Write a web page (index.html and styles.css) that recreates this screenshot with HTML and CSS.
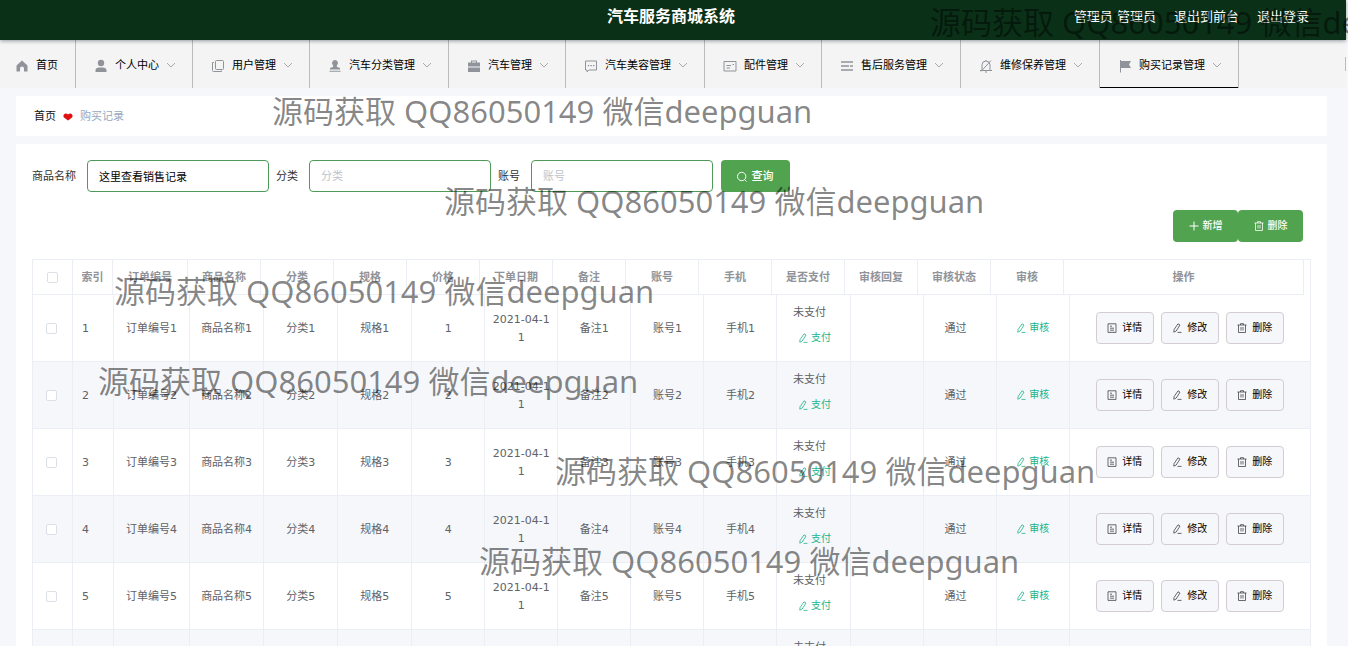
FILE: index.html
```html
<!DOCTYPE html>
<html lang="zh-CN">
<head>
<meta charset="utf-8">
<title>汽车服务商城系统</title>
<link rel="stylesheet" href="styles.css">
</head>
<body>
<svg class="sprite" aria-hidden="true">
  <symbol id="home" viewBox="0 0 14 14"><path fill="currentColor" d="M7 1.500 1.500 6.500V12.500h3.500V9.500a2 2 0 0 1 4 0v3h3.500V6.500z"/></symbol>
  <symbol id="user" viewBox="0 0 14 14"><circle fill="currentColor" cx="7" cy="4" r="3.200"/><path fill="currentColor" d="M1.500 13v-1.500c0-2 1.500-3 3.500-3h4c2 0 3.500 1 3.500 3V13z"/></symbol>
  <symbol id="copy" viewBox="0 0 14 14"><path fill="none" stroke="currentColor" d="M5.500 1.500h6a1 1 0 0 1 1 1v7a1 1 0 0 1-1 1h-6a1 1 0 0 1-1-1v-7a1 1 0 0 1 1-1zM3 3.500H1.500v8a1 1 0 0 0 1 1h8v-1"/></symbol>
  <symbol id="stamp" viewBox="0 0 14 14"><path fill="currentColor" d="M7 1a3 3 0 0 1 2 5.200c-.5.8-.2 1.800 1 2l2 .8v1.500H2V9l2-.8c1.200-.2 1.500-1.200 1-2A3 3 0 0 1 7 1zM1.500 11.800h11v1h-11z"/></symbol>
  <symbol id="case" viewBox="0 0 14 14"><path fill="currentColor" d="M4 3.500V1.500h6v2h3v4H1v-4zm1 0h4v-1H5zM1 8.500h12V13H1z"/></symbol>
  <symbol id="chat" viewBox="0 0 14 14"><path fill="none" stroke="currentColor" d="M1.500 2h11v9H5l-2 1.800V11H1.500z"/><path fill="currentColor" d="M3.800 6h1.400v1.200H3.800zm2.600 0h1.400v1.200H6.400zM9 6h1.400v1.200H9z"/></symbol>
  <symbol id="postcard" viewBox="0 0 14 14"><path fill="none" stroke="currentColor" d="M1 2.500h12v9.500H1zM3.500 6.500H8M3.500 9H7M9.500 5.500h1.500"/></symbol>
  <symbol id="lines" viewBox="0 0 14 14"><path fill="none" stroke="currentColor" stroke-width="1.500" d="M1 3h12M1 7h8M10 7h3M1 11h12"/></symbol>
  <symbol id="bell" viewBox="0 0 14 14"><path fill="none" stroke="currentColor" d="M3 11V6a4 4 0 0 1 8 0v5M1 11.500h12M6 13h2M7 2V1M12 1.500 2 12.500"/></symbol>
  <symbol id="flag" viewBox="0 0 14 14"><path fill="currentColor" d="M2 1h1v1h10l-2 3.500L13 9H3v4.500H2z"/></symbol>
  <symbol id="down" viewBox="0 0 10 10"><path fill="none" stroke="currentColor" d="m1 3 4 4 4-4"/></symbol>
  <symbol id="heart" viewBox="0 0 10 10"><path fill="currentColor" d="M5 8.500 1 5.500C-1 3 2.500 0 5 2.500 7.500 0 11 3 9 5.500z"/></symbol>
  <symbol id="search" viewBox="0 0 12 12"><circle cx="5.700" cy="5.500" r="4.200" fill="none" stroke="currentColor"/><path stroke="currentColor" d="m8.500 8.500 2 2"/></symbol>
  <symbol id="plus" viewBox="0 0 10 10"><path stroke="currentColor" d="M5 .5v9M.5 5h9"/></symbol>
  <symbol id="trash" viewBox="0 0 10 10"><path fill="none" stroke="currentColor" stroke-width=".8" d="M.5 2h9M3.500 2V.7h3V2M1.500 2v7.500h7V2M4 4v3.500M6 4v3.500"/></symbol>
  <symbol id="edit" viewBox="0 0 10 10"><path fill="none" stroke="currentColor" stroke-width=".8" d="M6 .8 8 2 4.200 8 1.800 9.200 2 6.700zM5.500 9.400h4"/></symbol>
  <symbol id="doc" viewBox="0 0 10 10"><path fill="none" stroke="currentColor" stroke-width=".8" d="M1 .8h8v8.600H1zM3 3.200h2M3 5.200h4M3 7.200h4"/></symbol>
</svg>

<div class="page">
  <header class="topbar">
    <h1 class="topbar-title">汽车服务商城系统</h1>
    <div class="topbar-links">
      <span>管理员 管理员</span>
      <a href="#">退出到前台</a>
      <a href="#">退出登录</a>
    </div>
  </header>

  <nav class="menu">
    <a class="menu-item menu-home" href="#"><svg class="menu-icon"><use href="#home"/></svg>首页</a>
    <a class="menu-item" href="#"><svg class="menu-icon"><use href="#user"/></svg>个人中心<svg class="menu-arrow"><use href="#down"/></svg></a>
    <a class="menu-item" href="#"><svg class="menu-icon"><use href="#copy"/></svg>用户管理<svg class="menu-arrow"><use href="#down"/></svg></a>
    <a class="menu-item" href="#"><svg class="menu-icon"><use href="#stamp"/></svg>汽车分类管理<svg class="menu-arrow"><use href="#down"/></svg></a>
    <a class="menu-item" href="#"><svg class="menu-icon"><use href="#case"/></svg>汽车管理<svg class="menu-arrow"><use href="#down"/></svg></a>
    <a class="menu-item" href="#"><svg class="menu-icon"><use href="#chat"/></svg>汽车美容管理<svg class="menu-arrow"><use href="#down"/></svg></a>
    <a class="menu-item" href="#"><svg class="menu-icon"><use href="#postcard"/></svg>配件管理<svg class="menu-arrow"><use href="#down"/></svg></a>
    <a class="menu-item" href="#"><svg class="menu-icon"><use href="#lines"/></svg>售后服务管理<svg class="menu-arrow"><use href="#down"/></svg></a>
    <a class="menu-item" href="#"><svg class="menu-icon"><use href="#bell"/></svg>维修保养管理<svg class="menu-arrow"><use href="#down"/></svg></a>
    <a class="menu-item menu-active" href="#"><svg class="menu-icon"><use href="#flag"/></svg>购买记录管理<svg class="menu-arrow"><use href="#down"/></svg></a>
    <span class="menu-end"></span>
  </nav>

  <main class="content">
    <div class="card crumbs">
      <a class="crumb-home" href="#">首页</a>
      <svg class="crumb-heart"><use href="#heart"/></svg>
      <span>购买记录</span>
    </div>

    <section class="card panel">
      <form class="search">
        <label for="goods">商品名称</label><input id="goods" type="text" value="这里查看销售记录">
        <label for="kind">分类</label><input id="kind" type="text" placeholder="分类">
        <label for="account">账号</label><input id="account" type="text" placeholder="账号">
        <button class="btn btn-search" type="button"><svg><use href="#search"/></svg>查询</button>
      </form>
      <div class="actions">
        <button class="btn" type="button"><svg><use href="#plus"/></svg>新增</button>
        <button class="btn" type="button"><svg><use href="#trash"/></svg>删除</button>
      </div>

      <div class="grid">
        <div class="grid-head">
          <table>
            <colgroup><col class="c-check"><col class="c-index"><col class="c-order"><col span="12"><col class="c-ops"></colgroup>
            <thead><tr>
              <th><input type="checkbox" aria-label="全选"></th><th>索引</th><th>订单编号</th><th>商品名称</th><th>分类</th><th>规格</th><th>价格</th><th>下单日期</th><th>备注</th><th>账号</th><th>手机</th><th>是否支付</th><th>审核回复</th><th>审核状态</th><th>审核</th><th>操作</th>
            </tr></thead>
          </table>
        </div>
        <table class="grid-body">
          <colgroup><col class="c-check"><col class="c-index"><col class="c-order"><col class="c-text" span="3"><col span="9"><col class="c-ops"></colgroup>
          <tbody id="rows"></tbody>
        </table>
      </div>
    </section>
  </main>

  <div class="marks" aria-hidden="true">
    <span class="mark m1">源码获取 QQ86050149 微信deepguan</span>
    <span class="mark m2">源码获取 QQ86050149 微信deepguan</span>
    <span class="mark m3">源码获取 QQ86050149 微信deepguan</span>
    <span class="mark m4">源码获取 QQ86050149 微信deepguan</span>
    <span class="mark m5">源码获取 QQ86050149 微信deepguan</span>
    <span class="mark m6">源码获取 QQ86050149 微信deepguan</span>
    <span class="mark m7">源码获取 QQ86050149 微信deepguan</span>
  </div>
</div>
<script src="app.js"></script>
</body>
</html>
```
FILE: styles.css
```css
* { box-sizing: border-box; }
body {
  margin: 0;
  background: #f5f7fa;
  color: #111;
  font: 11px/18px "DejaVu Sans", "Noto Sans CJK SC", sans-serif;
}
a { color: inherit; text-decoration: none; }
svg { flex: none; }
button, input { font: inherit; margin: 0; }
.sprite { position: absolute; width: 0; height: 0; }

.page {
  position: relative;
  height: 100vh;
  overflow: hidden;
  padding-right: 2px;
}

.topbar {
  position: relative;
  display: grid;
  grid-template-columns: 1fr auto 1fr;
  height: 40px;
  padding: 0 4px 7px 0;
  align-items: center;
  background: #0a3118;
  color: #fff;
  box-shadow: 0 1px 4px rgba(0, 21, 41, .4);
}
.topbar-title {
  grid-column: 2;
  margin: 0;
  font-size: 16px;
  line-height: 24px;
}
.topbar-links {
  display: flex;
  justify-content: flex-end;
  gap: 18px;
  padding-right: 33px;
  font-size: 13px;
}

.menu {
  display: flex;
  height: 48px;
  background: #f4f4f4;
  color: #000;
}
.menu-item {
  display: flex;
  align-items: center;
  padding: 3px 16px 0 18px;
  border-right: 1px solid #bbb;
  white-space: nowrap;
}
.menu-home { padding: 3px 17px 0 15px; }
.menu-active { box-shadow: inset 0 -1px #000; }
.menu-icon { width: 14px; height: 14px; margin-right: 7px; color: #909399; }
.menu-arrow { width: 10px; height: 10px; margin: 0 0 2px 7px; color: #aaa; }
.menu-end {
  height: 14px;
  margin: auto 0 auto auto;
  border-right: 1px solid #bbb;
}

.content { padding: 8px 19px 0 16px; }
.card { background: #fff; }
.crumbs {
  display: flex;
  align-items: center;
  gap: 7px;
  height: 40px;
  padding: 2px 0 0 18px;
  color: #97a8be;
}
.crumb-home { color: #111; }
.crumb-heart { width: 10px; height: 10px; color: #e01010; }

.panel { margin-top: 8px; padding: 16px; }
.search { display: flex; align-items: center; height: 32px; color: #303133; }
.search label { padding-top: 2px; }
.search input {
  width: 182px;
  height: 32px;
  margin: 0 7px 0 11px;
  padding: 0 11px;
  border: 1px solid #4f9a58;
  border-radius: 4px;
  background: #fff;
  color: #000;
}
.search input::placeholder { color: #c0c4cc; }
.btn {
  display: inline-flex;
  align-items: center;
  justify-content: center;
  gap: 4px;
  width: 65px;
  height: 32px;
  padding: 0;
  border: 0;
  border-radius: 4px;
  background: #52a350;
  color: #fff;
  font-size: 10px;
  font-weight: 500;
}
.btn svg { width: 10px; height: 10px; }
.btn-search { width: 69px; margin-left: 1px; padding: 1px 2px 0 0; font-size: 11px; }
.btn-search svg { width: 12px; height: 12px; }
.actions {
  display: flex;
  justify-content: flex-end;
  margin: 18px 8px 17px 0;
}

.grid { border: 1px solid #ebeef5; border-bottom: 0; }
.grid-head { padding-right: 6px; }
table { width: 100%; table-layout: fixed; border-spacing: 0; }
col { width: 73px; }
.c-check, .c-index { width: 40px; }
.c-order { width: 75px; }
.c-ops { width: 240px; }
.grid-body .c-index { width: 41px; }
.grid-body .c-order { width: 76px; }
.grid-body .c-text { width: 74px; }
th, td {
  padding: 2px 7px 0;
  border-right: 1px solid #ebeef5;
  border-bottom: 1px solid #ebeef5;
  text-align: center;
  vertical-align: middle;
}
th:first-child, td:first-child, td:last-child { padding-top: 0; }
th { height: 35px; color: #909399; font-weight: 700; }
td { height: 67px; color: #606266; word-break: break-all; }
.grid-body td:last-child { border-right: 0; }
.grid-body tr:nth-child(even) { background: #f5f7fa; }
.grid-body .cell-index { padding-left: 9px; text-align: left; }
.grid-body .cell-state { padding-right: 15px; }
input[type="checkbox"] {
  display: block;
  width: 11px;
  height: 11px;
  margin: 0 auto;
  border: 1px solid #dcdfe6;
  border-radius: 2px;
  background: #fff;
  appearance: none;
}
td input[type="checkbox"] { margin-left: 6px; }

.link {
  display: inline-flex;
  align-items: center;
  gap: 3px;
  padding: 0;
  border: 0;
  background: none;
  color: #20b48a;
  font-size: 10px;
  line-height: 18px;
}
.link svg { width: 10px; height: 10px; }
.pay { display: grid; gap: 7px; padding-bottom: 8px; }
.pay span { padding-right: 8px; }
.pay .link { justify-content: center; padding-left: 2px; }
.ops { display: flex; justify-content: center; gap: 7px; }
.op {
  display: flex;
  align-items: center;
  justify-content: center;
  gap: 5px;
  width: 58px;
  height: 32px;
  padding: 0;
  border: 1px solid #d3cdd3;
  border-radius: 4px;
  background: #f5f7fb;
  color: #000;
  font-size: 10px;
}
.op svg { width: 10px; height: 10px; color: #444; }

.marks {
  position: absolute;
  inset: 0;
  overflow: hidden;
  pointer-events: none;
}
.mark {
  position: absolute;
  color: rgba(0, 0, 0, .48);
  font: 31px/40px "Noto Sans", "Noto Sans CJK SC", sans-serif;
  white-space: nowrap;
}
.m1 { left: 930px; top: 2px; }
.m2 { left: 272px; top: 91px; }
.m3 { left: 444px; top: 181px; }
.m4 { left: 114px; top: 271px; }
.m5 { left: 98px; top: 361px; }
.m6 { left: 555px; top: 451px; }
.m7 { left: 479px; top: 541px; }
```
FILE: app.js
```js
const icon = name => `<svg><use href="#${name}"/></svg>`;
const row = n => `<tr>
  <td><input type="checkbox" aria-label="选择第${n}行"></td>
  <td class="cell-index">${n}</td>
  <td>订单编号${n}</td><td>商品名称${n}</td><td>分类${n}</td><td>规格${n}</td><td>${n}</td>
  <td>2021-04-11</td><td>备注${n}</td><td>账号${n}</td><td>手机${n}</td>
  <td><div class="pay"><span>未支付</span><button class="link" type="button">${icon("edit")}支付</button></div></td>
  <td></td><td class="cell-state">通过</td>
  <td><button class="link" type="button">${icon("edit")}审核</button></td>
  <td><div class="ops">
    <button class="op" type="button">${icon("doc")}详情</button>
    <button class="op" type="button">${icon("edit")}修改</button>
    <button class="op" type="button">${icon("trash")}删除</button>
  </div></td>
</tr>`;
document.getElementById("rows").innerHTML = [1, 2, 3, 4, 5, 6].map(row).join("");
```
